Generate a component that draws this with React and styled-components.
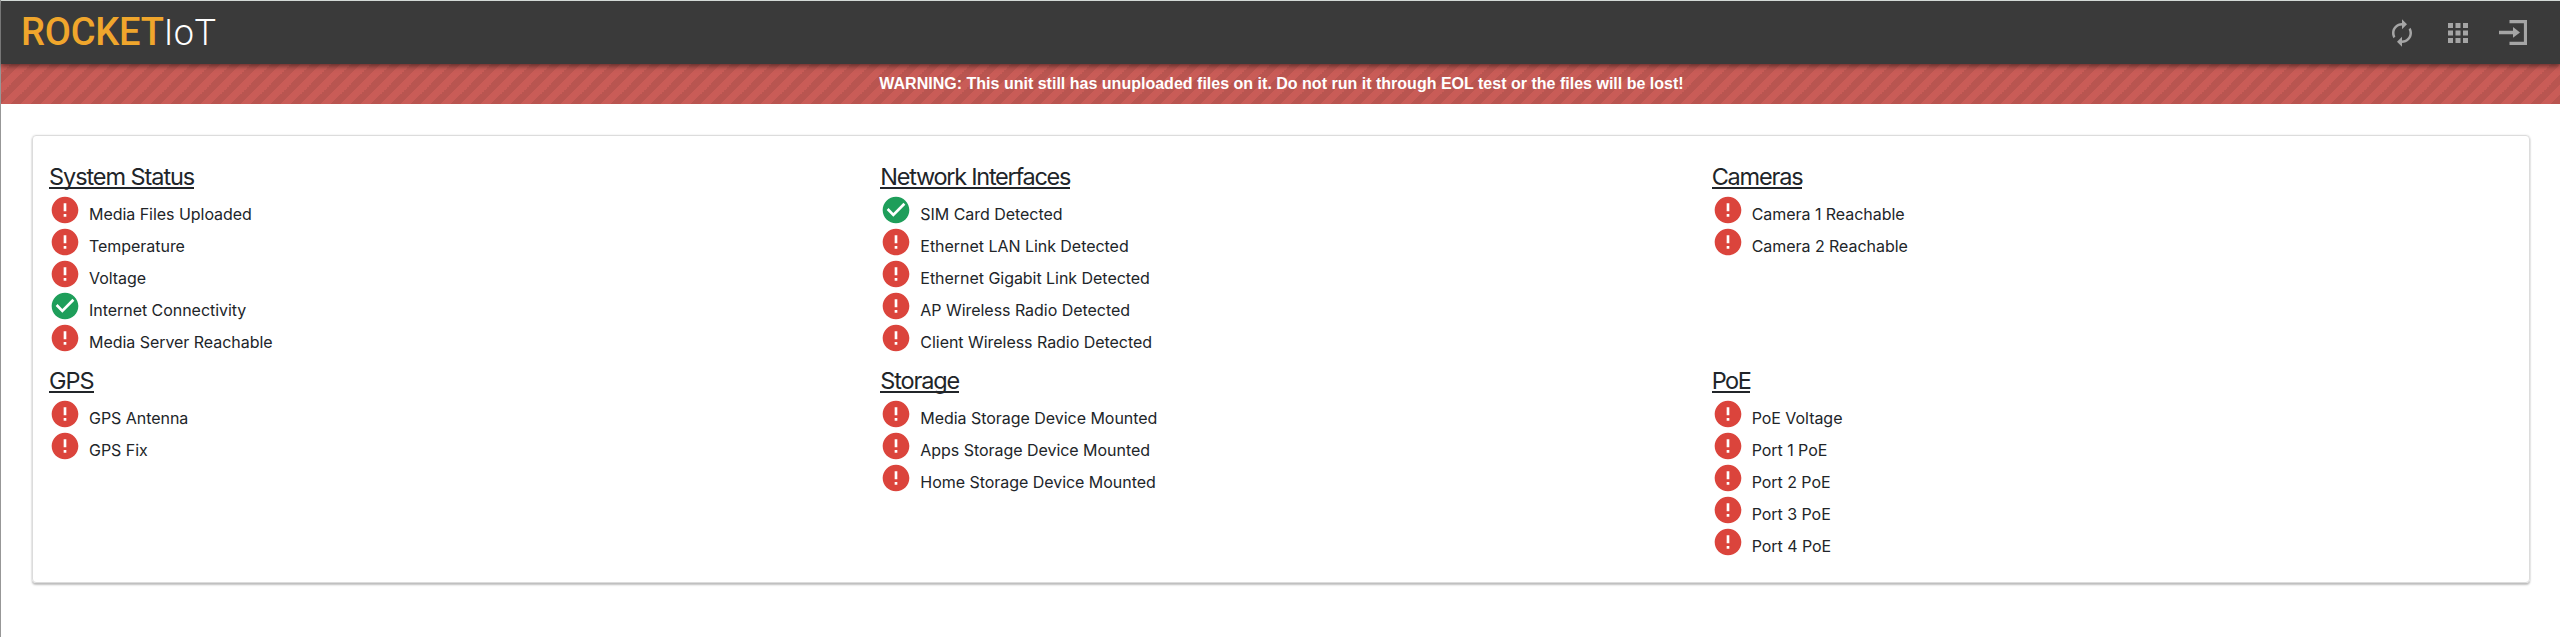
import React from 'react';
import styled, { createGlobalStyle } from 'styled-components';

const Global = createGlobalStyle`
  * { box-sizing: border-box; }
  body { margin: 0; background: #fff; }
`;

const Page = styled.div`
  min-height: 637px;
  border-left: 1px solid #979797;
  font-family: Inter, "Liberation Sans", sans-serif;
  color: #212529;
`;

const Header = styled.header`
  position: relative;
  z-index: 1;
  display: flex;
  align-items: center;
  justify-content: space-between;
  height: 64px;
  padding: 0 33px 0 20px;
  background: #3a3a3a;
  border-top: 1px solid #d3d9d6;
  box-shadow: 0 2px 5px rgba(0, 0, 0, 0.5);
`;

const Logo = styled.div`
  display: flex;
  align-items: baseline;
  font-family: Roboto, sans-serif;
  line-height: 62px;
  white-space: nowrap;
`;

const LogoStrong = styled.span`
  color: #f0a62c;
  font-size: 38px;
  font-weight: 500;
  letter-spacing: -0.2px;
`;

const LogoLight = styled.span`
  color: #fff;
  font-size: 36px;
  font-weight: 300;
  letter-spacing: 0.5px;
`;

const Actions = styled.nav`
  display: flex;
  align-items: center;
  padding-top: 1px;
`;

const ActionIcon = styled.svg`
  display: block;
  width: ${(p) => p.$w}px;
  height: 28px;
  margin-left: ${(p) => p.$gap || 0}px;
  fill: #a5a5a5;
`;

const Warning = styled.div`
  height: 40px;
  padding-left: 2px;
  text-align: center;
  color: #fff;
  font: bold 16px/39px "Liberation Sans", Arial, sans-serif;
  letter-spacing: 0.01px;
  background: #c95c57
    linear-gradient(-45deg, rgba(0, 0, 0, 0.08) 25%, transparent 25%, transparent 50%, rgba(0, 0, 0, 0.08) 50%, rgba(0, 0, 0, 0.08) 75%, transparent 75%)
    0 0 / 20px 20px;
`;

const Card = styled.main`
  display: grid;
  grid-template-columns: repeat(3, 1fr);
  grid-template-rows: 204px auto;
  height: 448px;
  margin: 31px 30px 0 31px;
  padding: 24px 2px 0 0;
  border: 1px solid #dcdcdc;
  border-radius: 4px;
  box-shadow: 0 2px 2px rgba(0, 0, 0, 0.24), 0 0 2px rgba(0, 0, 0, 0.12);
`;

const Section = styled.section`
  padding-left: 16px;
`;

const Title = styled.h2`
  width: max-content;
  height: 29px;
  margin: 0 0 7px;
  border-bottom: 2px solid #212529;
  font-size: 23.5px;
  font-weight: 400;
  line-height: 34px;
  letter-spacing: ${(p) => p.$spacing}px;
`;

const Row = styled.div`
  display: flex;
  height: 32px;
`;

const StatusIcon = styled.svg`
  flex: none;
  width: 32px;
  height: 32px;
  margin: -2px 8px 0 0;
  fill: ${(p) => (p.$ok ? '#1e9e5a' : '#db443c')};
`;

const Label = styled.span`
  font-size: 16px;
  line-height: 36px;
  letter-spacing: -0.04px;
  white-space: nowrap;
`;

const OK_PATH = 'M12 2C6.48 2 2 6.48 2 12s4.48 10 10 10 10-4.48 10-10S17.52 2 12 2zm-2 15l-5-5 1.41-1.41L10 14.17l7.59-7.59L19 8l-9 9z';
const ERROR_PATH = 'M12 2C6.48 2 2 6.48 2 12s4.48 10 10 10 10-4.48 10-10S17.52 2 12 2zm1 15h-2v-2h2v2zm0-4h-2V7h2v6z';

const sections = [
  { title: 'System Status', spacing: -1.07, items: ['Media Files Uploaded', 'Temperature', 'Voltage', 'Internet Connectivity', 'Media Server Reachable'] },
  { title: 'Network Interfaces', spacing: -1.27, items: ['SIM Card Detected', 'Ethernet LAN Link Detected', 'Ethernet Gigabit Link Detected', 'AP Wireless Radio Detected', 'Client Wireless Radio Detected'] },
  { title: 'Cameras', spacing: -1.2, items: ['Camera 1 Reachable', 'Camera 2 Reachable'] },
  { title: 'GPS', spacing: -1, items: ['GPS Antenna', 'GPS Fix'] },
  { title: 'Storage', spacing: -1.15, items: ['Media Storage Device Mounted', 'Apps Storage Device Mounted', 'Home Storage Device Mounted'] },
  { title: 'PoE', spacing: -1.5, items: ['PoE Voltage', 'Port 1 PoE', 'Port 2 PoE', 'Port 3 PoE', 'Port 4 PoE'] },
];
const passing = new Set(['Internet Connectivity', 'SIM Card Detected']);

function StatusRow({ label }) {
  const ok = passing.has(label);
  return (
    <Row>
      <StatusIcon $ok={ok} viewBox="0 0 24 24"><path d={ok ? OK_PATH : ERROR_PATH} /></StatusIcon>
      <Label>{label}</Label>
    </Row>
  );
}

export default function App() {
  return (
    <Page>
      <Global />
      <Header>
        <Logo><LogoStrong>ROCKET</LogoStrong><LogoLight>IoT</LogoLight></Logo>
        <Actions>
          <ActionIcon $w={20} viewBox="4 1 16 22"><path d="M12 6v3l4-4-4-4v3c-4.42 0-8 3.58-8 8 0 1.57.46 3.03 1.24 4.26L6.7 14.8c-.45-.83-.7-1.79-.7-2.8 0-3.31 2.69-6 6-6zm6.76 1.74L17.3 9.2c.44.84.7 1.79.7 2.8 0 3.31-2.69 6-6 6v-3l-4 4 4 4v-3c4.42 0 8-3.58 8-8 0-1.57-.46-3.03-1.24-4.26z" /></ActionIcon>
          <ActionIcon $w={20} $gap={36} viewBox="0 0 20 28"><path d="M0 4h5v5H0zM7.5 4h5v5h-5zM15 4h5v5h-5zM0 11.5h5v5H0zM7.5 11.5h5v5h-5zM15 11.5h5v5h-5zM0 19h5v5H0zM7.5 19h5v5h-5zM15 19h5v5h-5z" /></ActionIcon>
          <ActionIcon $w={28} $gap={31} viewBox="0 0 28 28"><path d="M10.5 1H28v25H10.5v-3.3h14.4V4.2H10.5zM0 11.7h14V8l7 5.5-7 5.3v-3.6H0z" /></ActionIcon>
        </Actions>
      </Header>
      <Warning>WARNING: This unit still has unuploaded files on it. Do not run it through EOL test or the files will be lost!</Warning>
      <Card>
        {sections.map((s) => (
          <Section key={s.title}>
            <Title $spacing={s.spacing}>{s.title}</Title>
            {s.items.map((item) => <StatusRow key={item} label={item} />)}
          </Section>
        ))}
      </Card>
    </Page>
  );
}
